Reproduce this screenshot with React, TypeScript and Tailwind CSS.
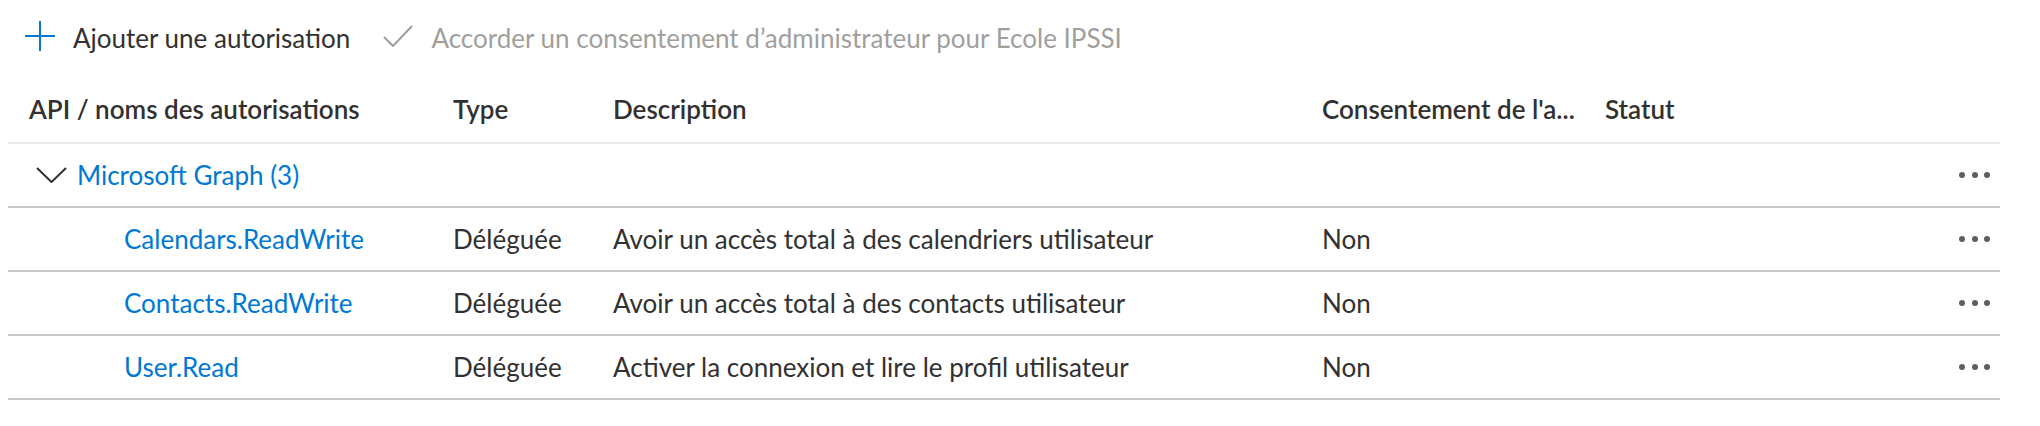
const rows = [
  { name: "Calendars.ReadWrite", type: "Déléguée", desc: "Avoir un accès total à des calendriers utilisateur", consent: "Non" },
  { name: "Contacts.ReadWrite", type: "Déléguée", desc: "Avoir un accès total à des contacts utilisateur", consent: "Non" },
  { name: "User.Read", type: "Déléguée", desc: "Activer la connexion et lire le profil utilisateur", consent: "Non" },
];

const cols = "grid grid-cols-[424px_160px_709px_283px_1fr_80px] items-center";

function Dots() {
  return (
    <div className="flex items-center gap-[6.5px] justify-end pr-[10px]">
      <span className="w-[6px] h-[6px] rounded-full bg-[#605e5c]" />
      <span className="w-[6px] h-[6px] rounded-full bg-[#605e5c]" />
      <span className="w-[6px] h-[6px] rounded-full bg-[#605e5c]" />
    </div>
  );
}

export default function App() {
  return (
    <div className="w-full h-[426px] bg-white text-[26px] text-[#323130] font-['Lato',sans-serif]">
      {/* command bar */}
      <div className="h-[76px] flex items-center pl-[25px]">
        <svg width="30" height="30" viewBox="0 0 30 30" className="shrink-0 mb-[4px]">
          <path d="M15 0V30M0 15H30" stroke="#0078d4" strokeWidth="2" fill="none" />
        </svg>
        <span className="ml-[18px]">Ajouter une autorisation</span>
        <svg width="30" height="22" viewBox="0 0 30 22" className="ml-[33px] shrink-0 mb-[4px]">
          <polyline points="1,12 10,21 29,1" stroke="#a19f9d" strokeWidth="2" fill="none" />
        </svg>
        <span className="ml-[18px] text-[#a19f9d]">Accorder un consentement d’administrateur pour Ecole IPSSI</span>
      </div>

      <div className="ml-[8px] w-[1992px]">
        {/* header */}
        <div className={`${cols} h-[68px] border-b-2 border-[#edebe9] font-semibold`}>
          <div className="pl-[21px]">API / noms des autorisations</div>
          <div className="pl-[21px]">Type</div>
          <div className="pl-[21px]">Description</div>
          <div className="pl-[21px] whitespace-nowrap">Consentement de l'a...</div>
          <div className="pl-[21px]">Statut</div>
          <div />
        </div>

        {/* group row */}
        <div className={`${cols} h-[64px] border-b-2 border-[#c8c6c4]`}>
          <div className="flex items-center pl-[28px]">
            <svg width="31" height="16" viewBox="0 0 31 16" className="shrink-0">
              <polyline points="1,1 15.5,15 30,1" stroke="#323130" strokeWidth="2" fill="none" />
            </svg>
            <span className="ml-[10px] text-[#0078d4] whitespace-nowrap">Microsoft Graph (3)</span>
          </div>
          <div />
          <div />
          <div />
          <div />
          <Dots />
        </div>

        {rows.map((r) => (
          <div key={r.name} className={`${cols} h-[64px] border-b-2 border-[#c8c6c4]`}>
            <div className="pl-[116px] text-[#0078d4]">{r.name}</div>
            <div className="pl-[21px]">{r.type}</div>
            <div className="pl-[21px] whitespace-nowrap">{r.desc}</div>
            <div className="pl-[21px]">{r.consent}</div>
            <div />
            <Dots />
          </div>
        ))}
      </div>
    </div>
  );
}
